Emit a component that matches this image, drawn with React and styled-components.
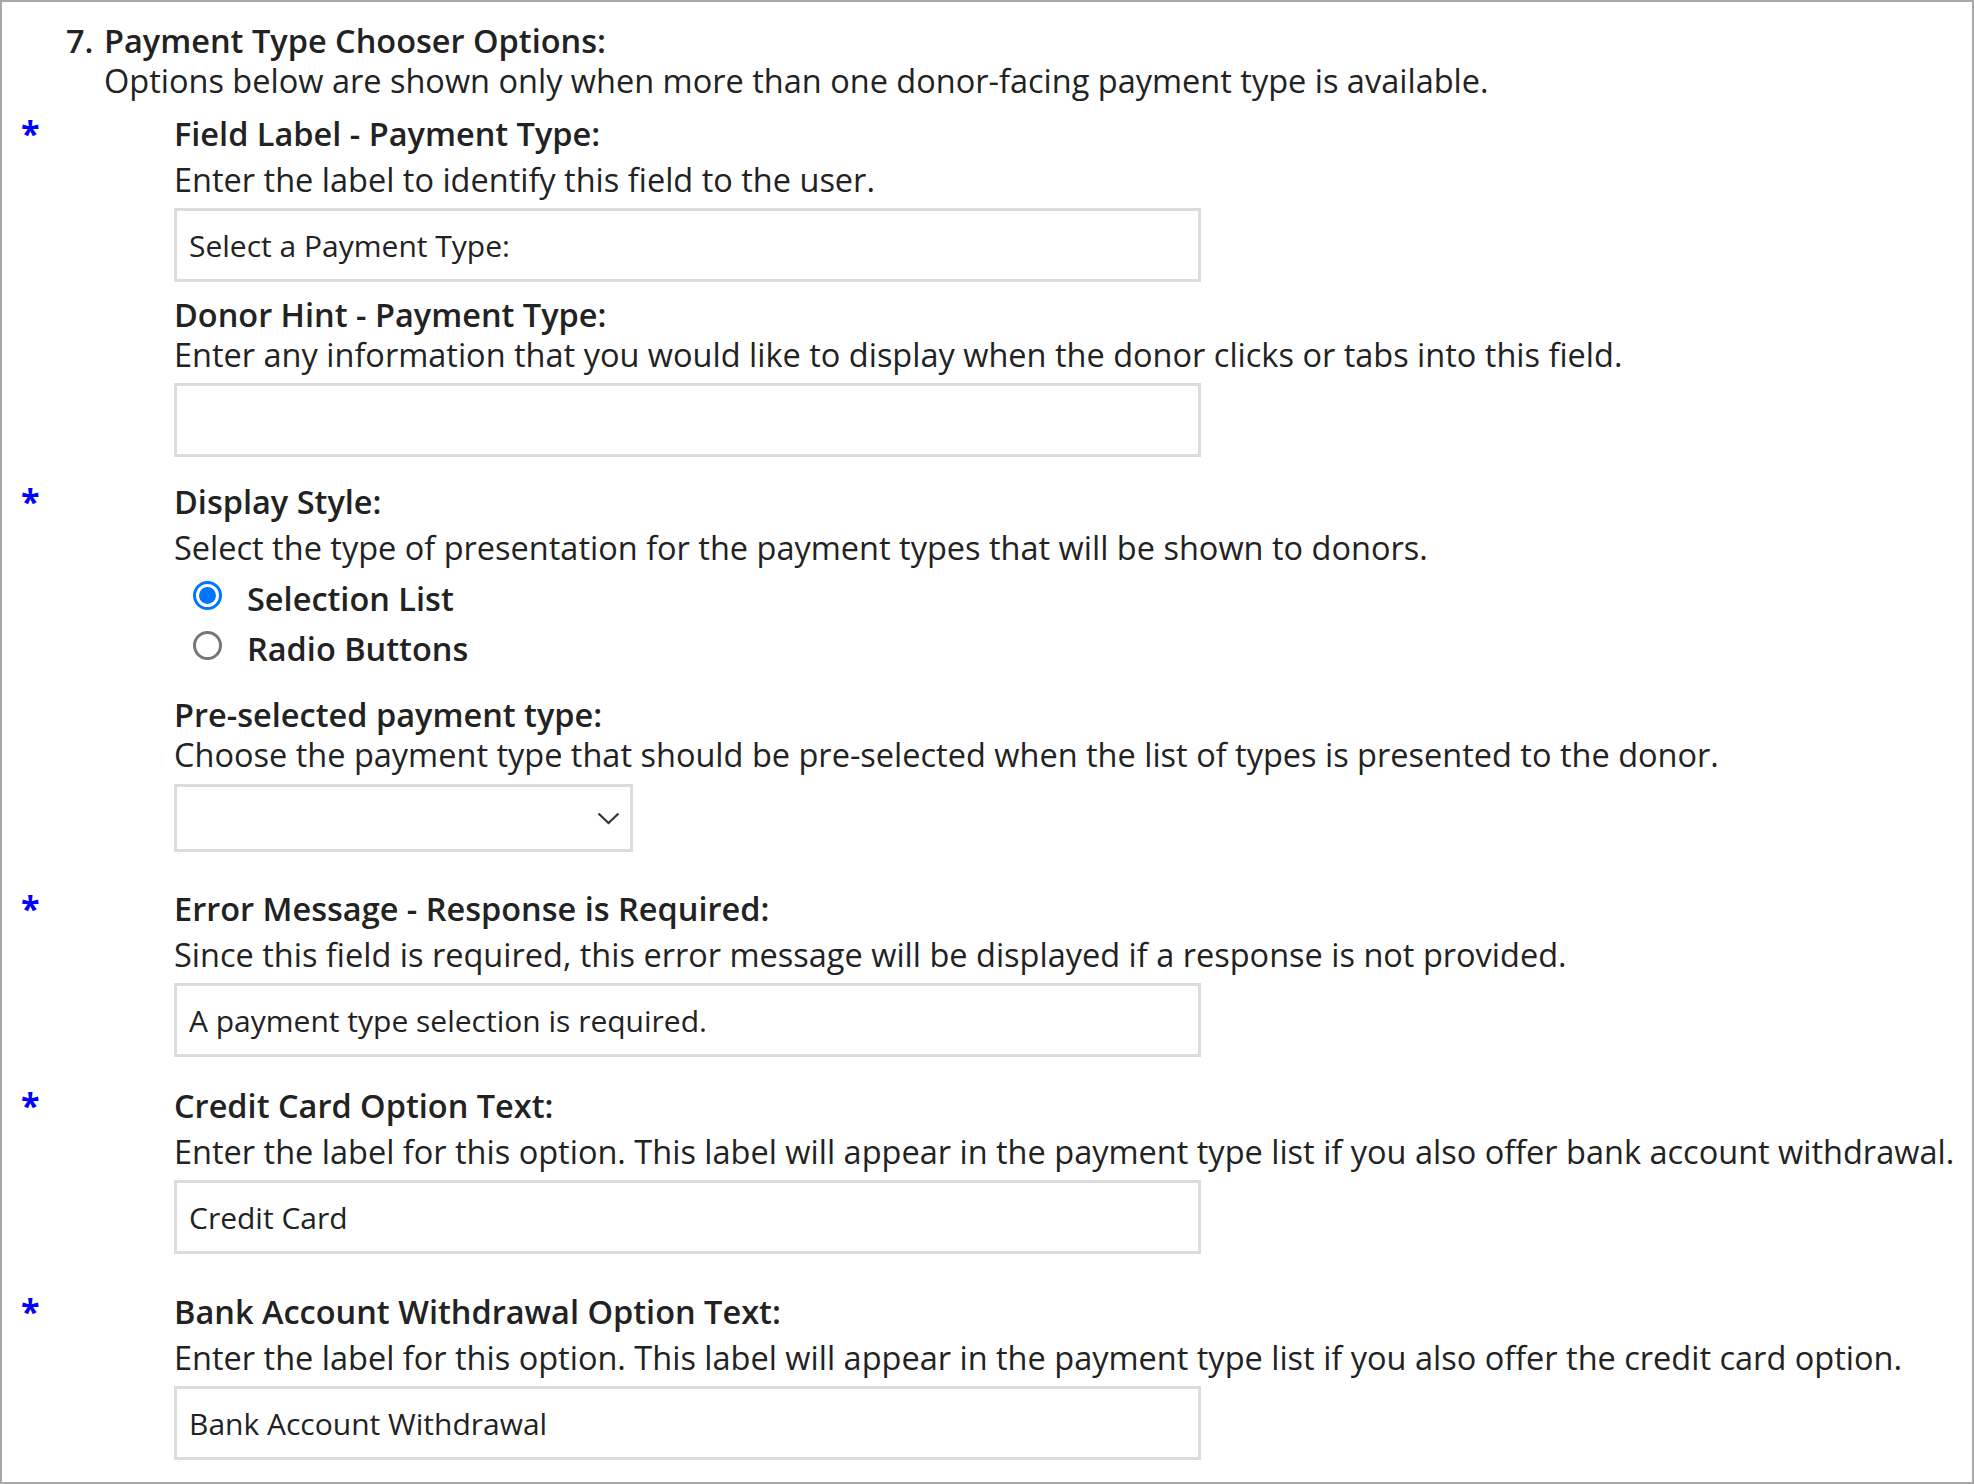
import React from "react";
import styled, { createGlobalStyle } from "styled-components";

const GlobalStyle = createGlobalStyle`
  html, body { margin: 0; padding: 0; background: #fff; }
  body { font-family: "Open Sans", "Noto Sans", sans-serif; color: #222; }
  *, *::before, *::after { box-sizing: border-box; }
`;

const Frame = styled.div`
  width: 1974px;
  height: 1484px;
  border: 2px solid #a8a8a8;
  padding-top: 19px;
  overflow: hidden;
  background: #fff;
`;

const Header = styled.header`
  display: flex;
  padding-left: 64px;
  font-size: 32.5px;
  line-height: 40px;
`;

const Num = styled.span`
  flex: none;
  width: 38px;
  font-weight: 600;
`;

const HeaderBody = styled.div`
  display: flex;
  flex-direction: column;
`;

const Title = styled.h2`
  margin: 0;
  font-size: 32.5px;
  font-weight: 600;
  line-height: 40px;
`;

const Intro = styled.p`
  margin: 0;
  font-size: 32.5px;
  line-height: 40px;
  white-space: nowrap;
`;

const Field = styled.section`
  display: flex;
  align-items: baseline;
  margin-top: ${(p) => p.$gap}px;
`;

const Marker = styled.div`
  flex: none;
  width: 172px;
  padding-left: 19px;
  color: #0000ff;
  font-weight: 700;
  font-size: 34px;
  line-height: 39px;
`;

const Body = styled.div`
  display: flex;
  flex-direction: column;
  align-items: flex-start;
`;

const Label = styled.label`
  font-size: 32.5px;
  font-weight: 600;
  line-height: 40px;
  margin-bottom: ${(p) => (p.$required ? 6 : 0)}px;
`;

const Hint = styled.p`
  margin: 0;
  font-size: 32.5px;
  line-height: 40px;
  white-space: nowrap;
`;

const TextInput = styled.input`
  margin: 8px 0 0;
  width: 1027px;
  height: 74px;
  border: 3px solid #dcdcdc;
  border-radius: 0;
  padding: 0 12px;
  font-family: inherit;
  font-size: 30px;
  color: #222;
  background: #fff;
  outline: none;
`;

const RadioList = styled.div`
  margin-top: 6px;
  display: flex;
  flex-direction: column;
`;

const RadioRow = styled.label`
  display: flex;
  align-items: center;
  height: 50px;
  padding-left: 19px;
  gap: 25px;
  font-size: 32.5px;
  font-weight: 600;
  line-height: 50px;
`;

const RadioDot = styled.span`
  flex: none;
  width: 29px;
  height: 29px;
  border-radius: 50%;
  border: 3px solid ${(p) => (p.$checked ? "#0075ff" : "#767676")};
  margin-bottom: 7px;
  display: flex;
  align-items: center;
  justify-content: center;
  &::after {
    content: "";
    width: 17px;
    height: 17px;
    border-radius: 50%;
    background: ${(p) => (p.$checked ? "#0075ff" : "transparent")};
  }
`;

const SelectBox = styled.div`
  margin-top: 9px;
  width: 459px;
  height: 68px;
  border: 3px solid #dcdcdc;
  display: flex;
  align-items: center;
  justify-content: flex-end;
  padding-right: 10px;
  background: #fff;
`;

const Chevron = () => (
  <svg width="23" height="13" viewBox="0 0 23 13" aria-hidden="true">
    <polyline points="1.5,1.5 11.5,11 21.5,1.5" fill="none" stroke="#333" strokeWidth="2.2" />
  </svg>
);

const FieldBlock = ({ gap, required, label, hint, children }) => (
  <Field $gap={gap}>
    <Marker>{required ? "*" : "\u00a0"}</Marker>
    <Body>
      <Label $required={required}>{label}</Label>
      <Hint>{hint}</Hint>
      {children}
    </Body>
  </Field>
);

export default function App() {
  return (
    <>
      <GlobalStyle />
      <Frame>
        <Header>
          <Num>7.</Num>
          <HeaderBody>
            <Title>Payment Type Chooser Options:</Title>
            <Intro>Options below are shown only when more than one donor-facing payment type is available.</Intro>
          </HeaderBody>
        </Header>

        <FieldBlock gap={13} required label="Field Label - Payment Type:" hint="Enter the label to identify this field to the user.">
          <TextInput defaultValue="Select a Payment Type:" />
        </FieldBlock>

        <FieldBlock gap={13} label="Donor Hint - Payment Type:" hint="Enter any information that you would like to display when the donor clicks or tabs into this field.">
          <TextInput defaultValue="" />
        </FieldBlock>

        <FieldBlock gap={25} required label="Display Style:" hint="Select the type of presentation for the payment types that will be shown to donors.">
          <RadioList>
            <RadioRow>
              <RadioDot $checked />
              Selection List
            </RadioRow>
            <RadioRow>
              <RadioDot />
              Radio Buttons
            </RadioRow>
          </RadioList>
        </FieldBlock>

        <FieldBlock gap={21} label="Pre-selected payment type:" hint="Choose the payment type that should be pre-selected when the list of types is presented to the donor.">
          <SelectBox role="combobox">
            <Chevron />
          </SelectBox>
        </FieldBlock>

        <FieldBlock gap={37} required label="Error Message - Response is Required:" hint="Since this field is required, this error message will be displayed if a response is not provided.">
          <TextInput defaultValue="A payment type selection is required." />
        </FieldBlock>

        <FieldBlock gap={29} required label="Credit Card Option Text:" hint="Enter the label for this option. This label will appear in the payment type list if you also offer bank account withdrawal.">
          <TextInput defaultValue="Credit Card" />
        </FieldBlock>

        <FieldBlock gap={38} required label="Bank Account Withdrawal Option Text:" hint="Enter the label for this option. This label will appear in the payment type list if you also offer the credit card option.">
          <TextInput defaultValue="Bank Account Withdrawal" />
        </FieldBlock>
      </Frame>
    </>
  );
}
